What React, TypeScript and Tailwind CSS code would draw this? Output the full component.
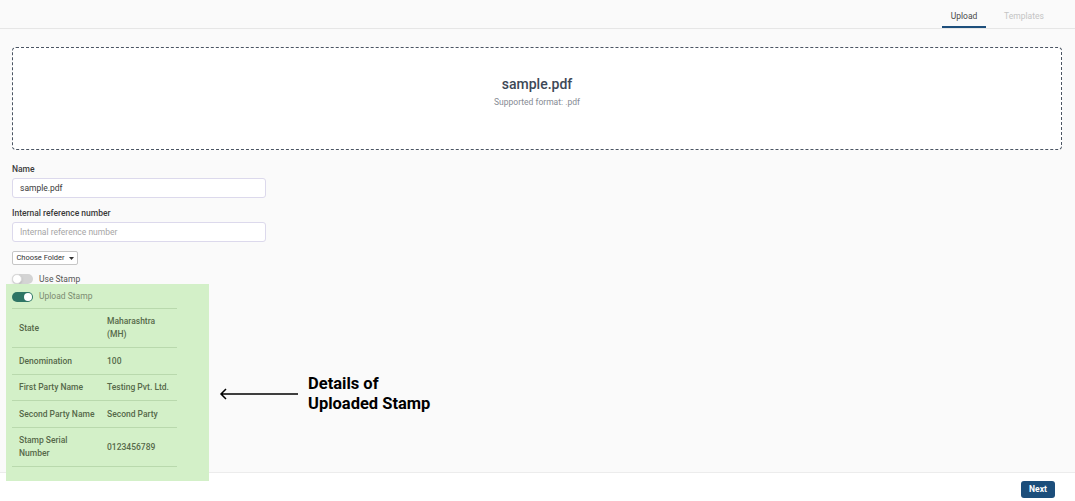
import React from "react";

const rows: { k: string; v: string; h: string }[] = [
  { k: "State", v: "Maharashtra\n(MH)", h: "h-[39px]" },
  { k: "Denomination", v: "100", h: "h-[27px]" },
  { k: "First Party Name", v: "Testing Pvt. Ltd.", h: "h-[26px]" },
  { k: "Second Party Name", v: "Second Party", h: "h-[27px]" },
  { k: "Stamp Serial\nNumber", v: "0123456789", h: "h-[39px]" },
];

function Toggle({ on }: { on: boolean }) {
  return on ? (
    <div className="w-[21px] h-[10px] rounded-full bg-[#2e7565] flex items-center justify-end pr-[1px]">
      <div className="w-[8px] h-[8px] rounded-full bg-white" />
    </div>
  ) : (
    <div className="w-[21px] h-[10px] rounded-full bg-[#d4d4d4] flex items-center justify-start">
      <div className="w-[10px] h-[10px] rounded-full bg-white border border-[#d9d9d9] shadow-sm" />
    </div>
  );
}

export default function App() {
  return (
    <div
      className="relative w-full h-[501px] bg-[#fafafa] flex flex-col overflow-hidden"
      style={{ fontFamily: "Roboto, 'Liberation Sans', sans-serif" }}
    >
      {/* header */}
      <div className="h-[29px] shrink-0 border-b border-[#e6e6e6] flex justify-end items-stretch pr-[29px] gap-[16px]">
        <div className="w-[44px] flex items-center justify-center border-b-2 border-[#1d4f7c] text-[8.5px] text-[#4a4a4a] pt-[6px]">
          Upload
        </div>
        <div className="w-[44px] flex items-center justify-center text-[8.5px] text-[#c4c4c4] pt-[4px]">
          Templates
        </div>
      </div>

      {/* main */}
      <div className="h-[443px] shrink-0 px-[12px] pt-[18px]">
        <div className="w-[1050px] h-[103px] bg-white border border-dashed border-[#4b5563] rounded-[4px] flex flex-col items-center pt-[27px]">
          <div className="text-[14px] leading-[18px] font-medium text-[#3d4756]">sample.pdf</div>
          <div className="mt-[4px] text-[8.5px] leading-[11px] text-[#868b94]">Supported format: .pdf</div>
        </div>

        <div className="mt-[13px] h-[12px] text-[8.5px] leading-[12px] font-medium text-[#3a3a3a]">Name</div>
        <div className="mt-[3px] w-[254px] h-[20px] bg-white border border-[#dcd9ec] rounded-[3px] flex items-center pl-[7px] text-[8.5px] text-[#3a3a3a]">
          sample.pdf
        </div>

        <div className="mt-[9px] h-[12px] text-[8.5px] leading-[12px] font-medium text-[#3a3a3a]">Internal reference number</div>
        <div className="mt-[3px] w-[254px] h-[20px] bg-white border border-[#dcd9ec] rounded-[3px] flex items-center pl-[7px] text-[8.5px] text-[#a6a6a6]">
          Internal reference number
        </div>

        <div className="mt-[9px] w-[66px] h-[14px] bg-white border border-[#c6c6c6] rounded-[2px] flex items-center justify-center gap-[4px] text-[7.5px] text-[#333]">
          <span>Choose Folder</span>
          <svg width="5" height="3" viewBox="0 0 5 3"><path d="M0 0h5L2.5 3z" fill="#333" /></svg>
        </div>

        <div className="mt-[9px] h-[10px] flex items-center gap-[6px]">
          <Toggle on={false} />
          <span className="text-[8.5px] leading-[10px] text-[#555]">Use Stamp</span>
        </div>

        {/* highlighted stamp details */}
        <div className="relative z-10 -ml-[6px] w-[203px] h-[197px] bg-[#d3f0c8] pl-[6px]">
          <div className="h-[24px] flex items-center gap-[6px] pt-[1px]">
            <Toggle on={true} />
            <span className="text-[8.5px] text-[#7b8b70]">Upload Stamp</span>
          </div>
          <div className="w-[165px] border-t border-[#b9d9ad]">
            {rows.map((r) => (
              <div key={r.k} className={`${r.h} flex items-center border-b border-[#b9d9ad] text-[8.5px] leading-[13px] font-medium text-[#56694a]`}>
                <div className="w-[95px] shrink-0 pl-[7px] whitespace-pre-line">{r.k}</div>
                <div className="whitespace-pre-line">{r.v}</div>
              </div>
            ))}
          </div>
        </div>
      </div>

      {/* footer */}
      <div className="flex-1 bg-white border-t border-[#ececec] flex justify-end items-start pt-[8px] pr-[20px]">
        <button className="w-[34px] h-[17px] bg-[#1c4e7b] rounded-[3px] text-white text-[8.5px] font-bold">Next</button>
      </div>

      {/* annotation */}
      <div className="absolute left-[219px] top-[374px] flex items-center gap-[9px]">
        <svg width="80" height="12" viewBox="0 0 80 12">
          <path d="M79 6H2M7 1L2 6l5 5" stroke="#000" strokeWidth="1.5" fill="none" />
        </svg>
        <div className="text-[16.5px] leading-[20px] font-bold text-black">
          Details of
          <br />
          Uploaded Stamp
        </div>
      </div>
    </div>
  );
}
